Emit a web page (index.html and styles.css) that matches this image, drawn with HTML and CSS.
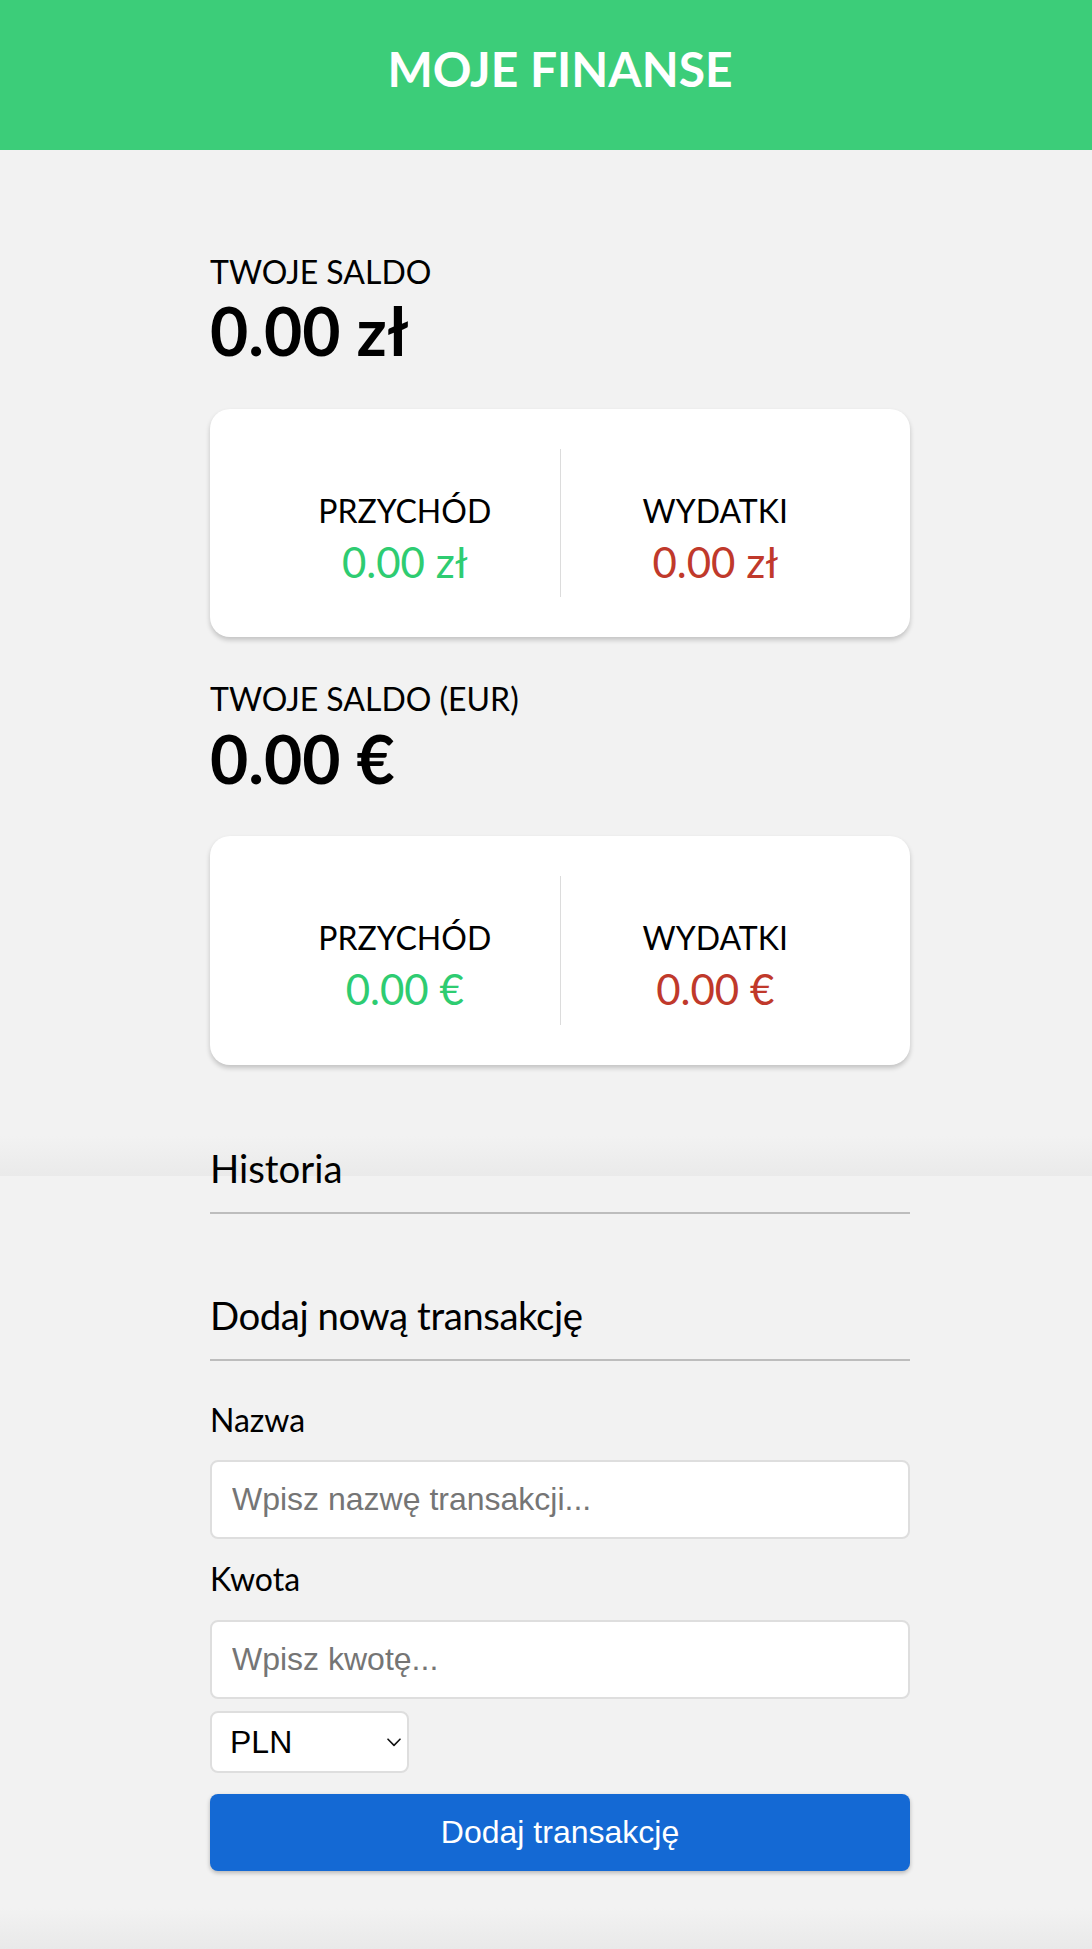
FILE: index.html
```html
<!DOCTYPE html>
<html lang="pl">
<head>
<meta charset="utf-8">
<title>Moje Finanse</title>
<link rel="stylesheet" href="styles.css">
</head>
<body>
<header class="topbar">
  <h1 class="topbar-title">MOJE FINANSE</h1>
</header>
<main class="container">
  <section class="balance-block">
    <h4 class="balance-label">TWOJE SALDO</h4>
    <p class="balance-value">0.00 zł</p>
    <div class="card">
      <div class="stat stat-first">
        <h4 class="stat-label">PRZYCHÓD</h4>
        <p class="stat-value plus">0.00 zł</p>
      </div>
      <div class="stat">
        <h4 class="stat-label">WYDATKI</h4>
        <p class="stat-value minus">0.00 zł</p>
      </div>
    </div>
  </section>
  <section class="balance-block">
    <h4 class="balance-label">TWOJE SALDO (EUR)</h4>
    <p class="balance-value">0.00 €</p>
    <div class="card">
      <div class="stat stat-first">
        <h4 class="stat-label">PRZYCHÓD</h4>
        <p class="stat-value plus">0.00 €</p>
      </div>
      <div class="stat">
        <h4 class="stat-label">WYDATKI</h4>
        <p class="stat-value minus">0.00 €</p>
      </div>
    </div>
  </section>
  <section class="history">
    <h3 class="section-title">Historia</h3>
    <ul class="history-list"></ul>
  </section>
  <section class="add">
    <h3 class="section-title section-title-tight">Dodaj nową transakcję</h3>
    <form class="form">
      <label class="field-label" for="text">Nazwa</label>
      <input class="field-input" type="text" id="text" placeholder="Wpisz nazwę transakcji...">
      <label class="field-label" for="amount">Kwota</label>
      <input class="field-input field-input-last" type="text" id="amount" placeholder="Wpisz kwotę...">
      <div class="select-wrap">
        <select class="currency">
          <option>PLN</option>
          <option>EUR</option>
        </select>
        <svg class="chevron" width="14" height="9" viewBox="0 0 14 9"><path d="M1 1.2 L7 7.4 L13 1.2" fill="none" stroke="#111" stroke-width="1.6" stroke-linecap="round" stroke-linejoin="round"/></svg>
      </div>
      <button class="submit" type="button">Dodaj transakcję</button>
    </form>
  </section>
</main>
</body>
</html>
```
FILE: styles.css
```css
* { box-sizing: border-box; }

html {
  background-color: #f2f2f2;
}

body {
  margin: 0;
  font-family: "Lato", "Noto Sans", sans-serif;
  color: #000;
  background-color: #f2f2f2;
  background-image: linear-gradient(to bottom,
    #f2f2f2 0px, #f2f2f2 1136px, #eaeaea 1176px,
    #f2f2f2 1176px, #f2f2f2 1908px, #e9e9e9 1949px);
  background-size: 100% 1949px;
  background-repeat: no-repeat;
  min-height: 1949px;
}

.topbar {
  height: 150px;
  background: #3ccd79;
  padding-top: 40px;
  padding-left: 28px;
  text-align: center;
}

.topbar-title {
  margin: 0;
  font-size: 48px;
  line-height: 1.2;
  font-weight: 700;
  color: #fff;
}

.container {
  width: 700px;
  margin: 0 auto;
  padding-left: 28px;
  box-sizing: content-box;
  padding-top: 103px;
}

.balance-block + .balance-block {
  margin-top: 43px;
}

.balance-label {
  margin: 0;
  font-size: 32px;
  line-height: 1.2;
  font-weight: 400;
}

.balance-value {
  margin: 0 0 38px;
  font-size: 66px;
  line-height: 1.2;
  font-weight: 700;
}

.card {
  display: flex;
  background: #fff;
  border-radius: 20px;
  padding: 40px;
  box-shadow: 0 3px 5px rgba(0, 0, 0, 0.2);
}

.stat {
  flex: 1;
  text-align: center;
  padding: 43px 0 10px;
}

.stat-first {
  border-right: 1px solid #dcdcdc;
}

.stat-label {
  margin: 0;
  font-size: 32px;
  line-height: 1.2;
  font-weight: 400;
}

.stat-value {
  margin: 7px 0 0;
  font-size: 42px;
  line-height: 1.2;
}

.plus { color: #2ecc71; }
.minus { color: #c0392b; }

.history {
  margin-top: 80px;
}

.section-title {
  margin: 0;
  font-size: 38.4px;
  line-height: 1.2;
  font-weight: 400;
  padding-bottom: 21px;
  border-bottom: 2px solid #bdbdbd;
}

.section-title-tight {
  letter-spacing: -0.45px;
}

.history-list {
  margin: 0;
  padding: 0;
  list-style: none;
}

.add {
  margin-top: 78px;
}

.form {
  display: flex;
  flex-direction: column;
  align-items: flex-start;
  padding-top: 40px;
  padding-bottom: 78px;
}

.field-label {
  display: block;
  font-size: 32px;
  line-height: 1.2;
  margin-bottom: 21px;
}

.field-input {
  display: block;
  width: 100%;
  height: 79px;
  border: 2px solid #dedede;
  border-radius: 8px;
  background: #fff;
  padding: 0 20px;
  font-family: "Liberation Sans", Arial, sans-serif;
  font-size: 32px;
  color: #000;
  margin: 0 0 21px;
  outline: none;
}

.field-input::placeholder {
  color: #757575;
}

.field-input-last {
  margin-bottom: 12px;
}

.select-wrap {
  position: relative;
  width: 199px;
  height: 62px;
}

.currency {
  appearance: none;
  -webkit-appearance: none;
  width: 100%;
  height: 100%;
  border: 2px solid #dedede;
  border-radius: 8px;
  background: #fff;
  padding: 0 0 0 18px;
  font-family: "Liberation Sans", Arial, sans-serif;
  font-size: 32px;
  color: #000;
  outline: none;
}

.chevron {
  position: absolute;
  left: 177px;
  top: 27px;
  pointer-events: none;
}

.submit {
  margin-top: 21px;
  width: 100%;
  height: 77px;
  border: none;
  border-radius: 8px;
  background: #1469d4;
  color: #fff;
  font-family: "Liberation Sans", Arial, sans-serif;
  font-size: 32px;
  box-shadow: 0 2px 4px rgba(0, 0, 0, 0.25);
}
```
